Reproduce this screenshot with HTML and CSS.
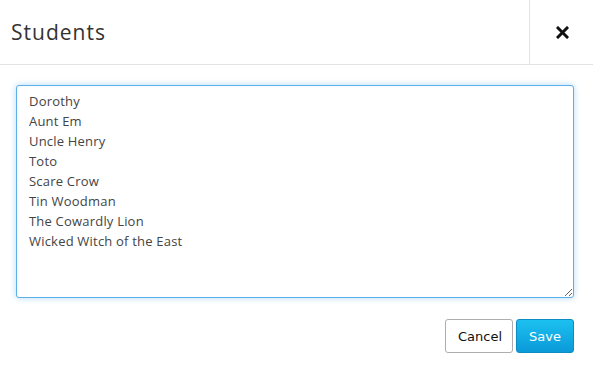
FILE: index.html
```html
<!DOCTYPE html>
<html lang="en">
<head>
  <meta charset="UTF-8" />
  <title>Students</title>
  <link rel="stylesheet" href="styles.css">
</head>
<body>

<div class="modal">
  <div class="modal-header">
    <h2>Students</h2>
    <button class="close-btn" aria-label="Close">
      <svg width="13" height="13" viewBox="0 0 13 13"><path d="M2 2 L11 11 M11 2 L2 11" stroke="#111" stroke-width="3" stroke-linecap="square"/></svg>
    </button>
  </div>

  <div class="modal-body">
    <textarea class="student-list">Dorothy
Aunt Em
Uncle Henry
Toto
Scare Crow
Tin Woodman
The Cowardly Lion
Wicked Witch of the East</textarea>
  </div>

  <div class="modal-footer">
    <button class="btn btn-cancel">Cancel</button>
    <button class="btn btn-save">Save</button>
  </div>
</div>

</body>
</html>
```

FILE: styles.css
```css
body {
  margin: 0;
  background-color: #fff;
  font-family: 'DejaVu Sans', sans-serif;
}

.modal {
  width: 593px;
}

.modal-header {
  display: flex;
  align-items: stretch;
  height: 64px;
  border-bottom: 1px solid #e3e3e3;
}

.modal-header h2 {
  flex: 1;
  margin: 0;
  padding-left: 11px;
  display: flex;
  align-items: center;
  font-family: 'Open Sans', sans-serif;
  font-size: 21px;
  font-weight: normal;
  color: #333;
  letter-spacing: 1px;
}

.close-btn {
  width: 64px;
  background: none;
  border: none;
  border-left: 1px solid #e3e3e3;
  display: flex;
  align-items: center;
  justify-content: center;
  padding: 0 0 0 1px;
  cursor: pointer;
}

.modal-body {
  padding: 20px 19px 0 16px;
}

.student-list {
  display: block;
  box-sizing: border-box;
  width: 558px;
  height: 213px;
  margin: 0;
  padding: 5px 12px;
  border: 1px solid #5aaeea;
  border-radius: 3px;
  box-shadow: 0 0 6px rgba(90, 174, 234, 0.45);
  outline: none;
  resize: both;
  font-family: 'Open Sans', sans-serif;
  font-size: 13px;
  line-height: 20px;
  letter-spacing: 0.2px;
  color: #444;
}

.modal-footer {
  display: flex;
  justify-content: flex-end;
  gap: 3px;
  padding: 21px 19px 0 0;
}

.btn {
  height: 34px;
  padding: 0 12px;
  border-radius: 3px;
  font-family: 'DejaVu Sans', sans-serif;
  font-size: 13px;
  cursor: pointer;
}

.btn-cancel {
  width: 68px;
  background-color: #fff;
  border: 1px solid #adadad;
  color: #111;
}

.btn-save {
  width: 58px;
  background: linear-gradient(#1cc0f0, #0a9ad8);
  border: 1px solid #0c8cc2;
  color: #fff;
}
```
